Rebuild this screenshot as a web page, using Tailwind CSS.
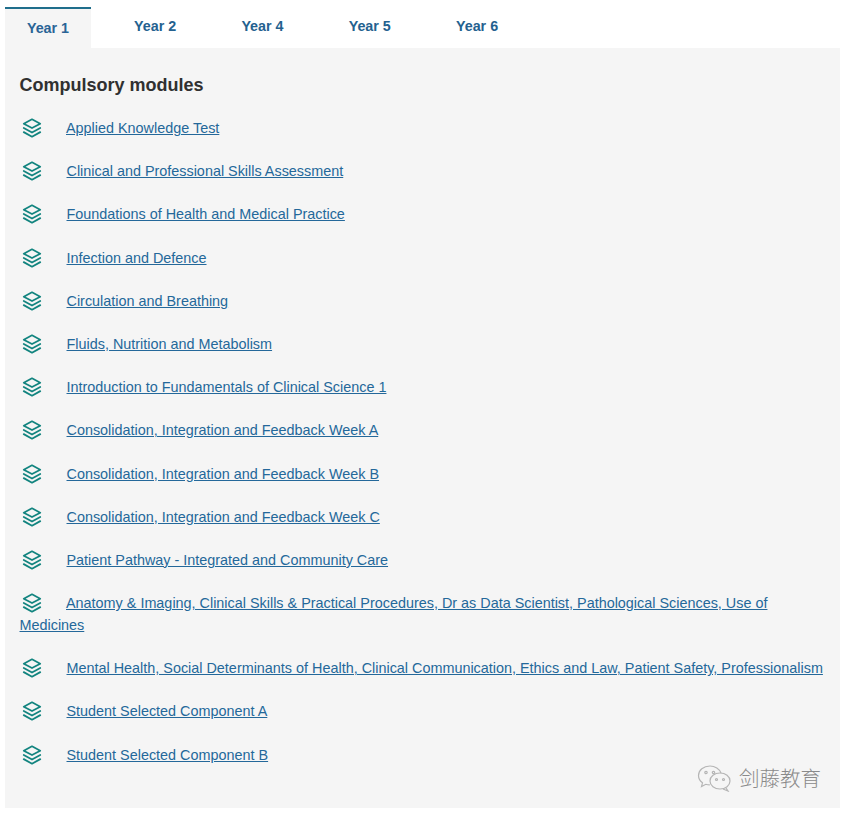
<!DOCTYPE html>
<html lang="en">
<head>
    <meta charset="UTF-8">
    <title>Modules</title>
    <script src="https://cdn.jsdelivr.net/npm/@tailwindcss/browser@4"></script>
</head>
<body class="bg-white font-['Liberation_Sans','Noto_Sans_CJK_SC',sans-serif] h-[816px] overflow-hidden relative">
    <svg width="0" height="0" class="absolute">
        <symbol id="layers" viewBox="0 0 24 24" fill="none" stroke="currentColor" stroke-width="1.900" stroke-linejoin="round" stroke-linecap="round">
            <path d="M12 2.500l9 4.800-9 4.800-9-4.800z"/>
            <path d="M3 12l9 5 9-5"/>
            <path d="M3 16.500l9 5 9-5"/>
        </symbol>
    </svg>

    <div class="px-[5px] pt-[7px]">
        <ul class="flex h-[41px] text-[14.300px] font-bold text-[#24618f]">
            <li class="w-[86px] bg-[#f5f5f5] border-t-2 border-[#1f6e8c] pt-[9px] text-center text-[#2a6496]">Year 1</li>
            <li class="ml-[10.500px] w-[107.300px] pt-[9px] text-center">Year 2</li>
            <li class="w-[107.300px] pt-[9px] text-center">Year 4</li>
            <li class="w-[107.300px] pt-[9px] text-center">Year 5</li>
            <li class="w-[107.300px] pt-[9px] text-center">Year 6</li>
        </ul>

        <div class="bg-[#f5f5f5] w-[835px] h-[760px] pl-[14.500px] pr-[14px] pt-[25px] text-[14.400px] leading-[22px] text-[#24689a]">
            <h2 class="text-[18px] leading-[24px] font-bold text-[#303030] mb-[20px]">Compulsory modules</h2>

            <p class="mb-[21.200px]"><svg class="inline-block align-[-6px] w-[22px] h-[22px] ml-[1px] mr-[23.500px] text-[#12847f]"><use href="#layers"/></svg><a href="#" class="underline">Applied Knowledge Test</a></p>
            <p class="mb-[21.200px]"><svg class="inline-block align-[-6px] w-[22px] h-[22px] ml-[1px] mr-[24px] text-[#12847f]"><use href="#layers"/></svg><a href="#" class="underline">Clinical and Professional Skills Assessment</a></p>
            <p class="mb-[21.200px]"><svg class="inline-block align-[-6px] w-[22px] h-[22px] ml-[1px] mr-[24px] text-[#12847f]"><use href="#layers"/></svg><a href="#" class="underline">Foundations of Health and Medical Practice</a></p>
            <p class="mb-[21.200px]"><svg class="inline-block align-[-6px] w-[22px] h-[22px] ml-[1px] mr-[24px] text-[#12847f]"><use href="#layers"/></svg><a href="#" class="underline">Infection and Defence</a></p>
            <p class="mb-[21.200px]"><svg class="inline-block align-[-6px] w-[22px] h-[22px] ml-[1px] mr-[24px] text-[#12847f]"><use href="#layers"/></svg><a href="#" class="underline">Circulation and Breathing</a></p>
            <p class="mb-[21.200px]"><svg class="inline-block align-[-6px] w-[22px] h-[22px] ml-[1px] mr-[24px] text-[#12847f]"><use href="#layers"/></svg><a href="#" class="underline">Fluids, Nutrition and Metabolism</a></p>
            <p class="mb-[21.200px]"><svg class="inline-block align-[-6px] w-[22px] h-[22px] ml-[1px] mr-[24px] text-[#12847f]"><use href="#layers"/></svg><a href="#" class="underline">Introduction to Fundamentals of Clinical Science 1</a></p>
            <p class="mb-[21.200px]"><svg class="inline-block align-[-6px] w-[22px] h-[22px] ml-[1px] mr-[24px] text-[#12847f]"><use href="#layers"/></svg><a href="#" class="underline">Consolidation, Integration and Feedback Week A</a></p>
            <p class="mb-[21.200px]"><svg class="inline-block align-[-6px] w-[22px] h-[22px] ml-[1px] mr-[24px] text-[#12847f]"><use href="#layers"/></svg><a href="#" class="underline">Consolidation, Integration and Feedback Week B</a></p>
            <p class="mb-[21.200px]"><svg class="inline-block align-[-6px] w-[22px] h-[22px] ml-[1px] mr-[24px] text-[#12847f]"><use href="#layers"/></svg><a href="#" class="underline">Consolidation, Integration and Feedback Week C</a></p>
            <p class="mb-[21.200px]"><svg class="inline-block align-[-6px] w-[22px] h-[22px] ml-[1px] mr-[24px] text-[#12847f]"><use href="#layers"/></svg><a href="#" class="underline">Patient Pathway - Integrated and Community Care</a></p>
            <p class="mb-[21.200px]"><svg class="inline-block align-[-6px] w-[22px] h-[22px] ml-[1px] mr-[23.500px] text-[#12847f]"><use href="#layers"/></svg><a href="#" class="underline">Anatomy &amp; Imaging, Clinical Skills &amp; Practical Procedures, Dr as Data Scientist, Pathological Sciences, Use of Medicines</a></p>
            <p class="mb-[21.200px]"><svg class="inline-block align-[-6px] w-[22px] h-[22px] ml-[1px] mr-[24px] text-[#12847f]"><use href="#layers"/></svg><a href="#" class="underline">Mental Health, Social Determinants of Health, Clinical Communication, Ethics and Law, Patient Safety, Professionalism</a></p>
            <p class="mb-[21.200px]"><svg class="inline-block align-[-6px] w-[22px] h-[22px] ml-[1px] mr-[24px] text-[#12847f]"><use href="#layers"/></svg><a href="#" class="underline">Student Selected Component A</a></p>
            <p><svg class="inline-block align-[-6px] w-[22px] h-[22px] ml-[1px] mr-[24px] text-[#12847f]"><use href="#layers"/></svg><a href="#" class="underline">Student Selected Component B</a></p>
        </div>
    </div>

    <!-- watermark -->
    <div class="absolute left-[697px] top-[764px] flex items-center gap-[7px] text-[#8a8a8a]">
        <svg width="35" height="28" viewBox="0 0 35 28" fill="none" stroke="#b5b5b5" stroke-width="1.200">
            <path d="M13 2C6.500 2 1.500 6 1.500 11.500c0 3 1.500 5.500 4 7.300L4.500 22.500l4.300-2.200c1.300.4 2.600.6 4 .6"/>
            <path d="M24 9c-1.500-4-6-7-11-7"/>
            <ellipse cx="23" cy="17" rx="10" ry="8"/>
            <path d="M29 24l2 3-5-2"/>
            <circle cx="9" cy="8.500" r="1.200"/>
            <circle cx="16.500" cy="8.500" r="1.200"/>
            <circle cx="19.500" cy="15.500" r="1"/>
            <circle cx="26.500" cy="15.500" r="1"/>
        </svg>
        <span class="text-[20.500px] leading-[28px] -translate-y-[1px] font-['Noto_Sans_CJK_SC',sans-serif] font-light">剑藤教育</span>
    </div>
</body>
</html>
